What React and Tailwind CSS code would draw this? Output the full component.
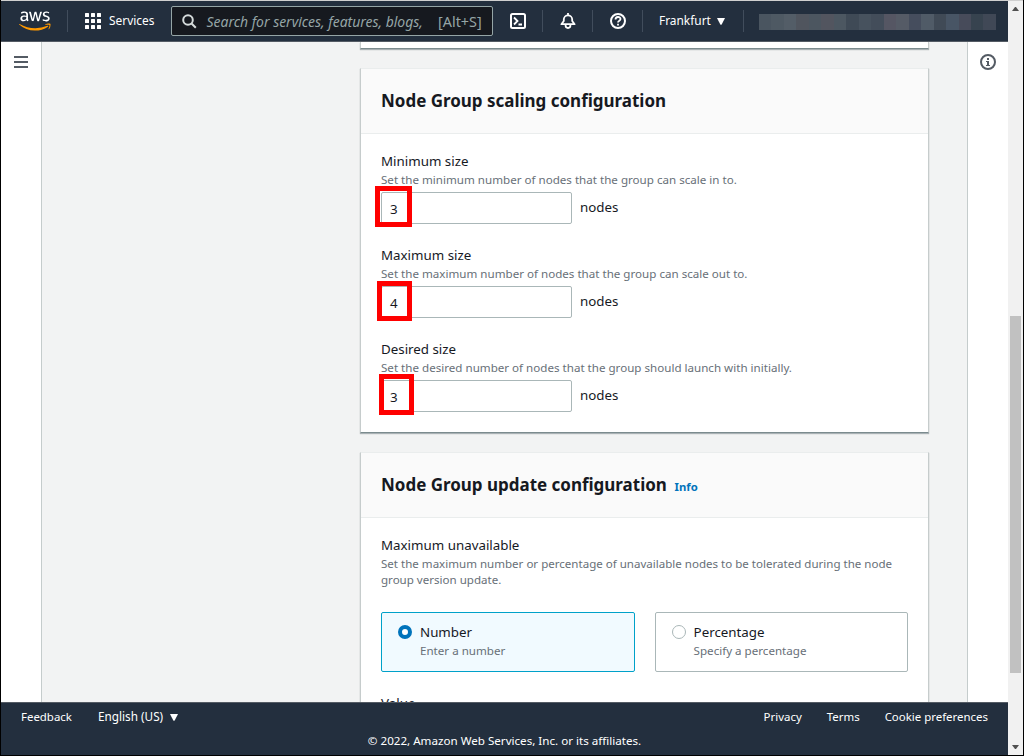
import { FaAws } from "react-icons/fa";

const blocks = ["#4a5560", "#4e5963", "#535d67", "#50555e", "#4c5660", "#52555f", "#4c5761", "#3f4a56", "#47525e", "#434d5a", "#555663", "#555b66", "#454d5d", "#505b67", "#404a56", "#485565", "#474b5a", "#37434f", "#404856"];

// Parts of the window behind that show along the left and bottom edges.
const edgeMarks = [130, 402, 674, 690, 706, 722, 738];
const bottomMarks = [[4, 3], [9, 2], [16, 4], [22, 5], [30, 3], [37, 6], [46, 3], [53, 5], [61, 5], [69, 4], [77, 3], [83, 5], [91, 6], [101, 4], [109, 5], [118, 2], [136, 4], [143, 2], [149, 6], [159, 3], [165, 5], [185, 3], [199, 5], [207, 4], [214, 6], [223, 3], [229, 5], [248, 2], [259, 3]];

const Divider = ({ className = "" }) => <span className={"h-[22px] w-px shrink-0 bg-[#414d5c] " + className} />;

const Caret = ({ className = "" }) => (
  <svg className={"shrink-0 " + className} width="8" height="7" viewBox="0 0 8 7" fill="#fff"><path d="M0 0h8L4.8 6.3q-.8 1-1.6 0z" /></svg>
);

function Header() {
  return (
    <header className="flex h-[41px] shrink-0 items-center border-b border-[#545b64] bg-[#232f3e] text-[11.9px] text-white">
      <div className="relative ml-[17.5px] mr-[0.5px] h-[26px] w-[32px] shrink-0">
        <FaAws className="h-[26px] w-[32px] [clip-path:inset(0_0_42%_0)]" />
        <FaAws className="absolute top-0 left-0 h-[26px] w-[32px] text-[#f90] [clip-path:inset(58%_0_0_0)]" />
      </div>
      <Divider className="ml-[16px]" />
      <svg className="ml-[17px] shrink-0" width="16" height="16" fill="#fff">
        {[0, 6, 12].map((y) => [0, 6, 12].map((x) => <rect key={x + "-" + y} x={x} y={y} width="4" height="4" rx=".5" />))}
      </svg>
      <span className="ml-2 w-[62px] shrink-0">Services</span>
      <div className="flex h-[30px] w-[322px] shrink-0 items-center rounded-[2px] border border-[#95a5a6] bg-[#16191f] text-[13.95px] text-[#95a5a6]">
        <svg className="ml-[10px] shrink-0" width="15" height="15" fill="none" stroke="#d5dbdb" strokeWidth="2"><circle cx="6" cy="6" r="4.8" /><path d="m9.5 9.5 4.3 4.3" /></svg>
        <span className="mt-[3px] ml-[9.5px] w-[231.5px] shrink-0 whitespace-nowrap italic">Search for services, features, blogs,</span>
        <span className="mt-px text-[14.4px] whitespace-nowrap">[Alt+S]</span>
      </div>
      <svg className="ml-[17px] shrink-0" width="16" height="16" fill="none" stroke="#fff" strokeWidth="2"><rect x="1" y="1" width="14" height="14" rx="1.5" /><path d="m4 4.5 3.5 3.5L4 11.5M8.5 11.5H12" strokeWidth="1.8" /></svg>
      <Divider className="ml-[16px]" />
      <svg className="ml-[17px] shrink-0" width="16" height="16" fill="none" stroke="#fff" strokeWidth="1.8" strokeLinejoin="round"><path d="M1.4 11.2h13.2L12.2 8V6.5a4.2 4.2 0 0 0-8.4 0V8zM5.6 12v.6a2.4 2.4 0 0 0 4.8 0V12M8 0v2.5" /></svg>
      <Divider className="ml-[16px]" />
      <svg className="ml-[17px] shrink-0" width="16" height="16" fill="none" stroke="#fff" strokeWidth="2"><circle cx="8" cy="8" r="7" /><path d="M5.5 6.5C5.5 3.2 10.5 3.3 10.5 6c0 1.8-2.5 1.5-2.5 3.5M8 10.7v1.8" strokeWidth="1.8" /></svg>
      <Divider className="ml-[16px]" />
      <span className="ml-[16px] w-[58px] shrink-0">Frankfurt</span>
      <Caret />
      <Divider className="ml-[18px]" />
      <div className="ml-[15px] flex h-4 w-[237px] shrink-0 translate-y-px">
        {blocks.map((c, i) => <span key={i} className="flex-1" style={{ backgroundColor: c }} />)}
      </div>
    </header>
  );
}

const card = "w-[569px] shrink-0 border-x border-t border-x-[#c6cccc] border-t-[#eaeded] bg-white shadow-[0_1px_1px_0_rgba(0,28,36,0.3)] border-b border-b-[#7b8b8e]";

function Title({ text, children }) {
  return (
    <div className="flex h-[65px] items-center border-b border-[#eaeded] bg-[#fafafa] px-5">
      <h2 className="-mt-px w-[285px] origin-left scale-x-[0.943] text-[18px] font-bold whitespace-nowrap">{text}</h2>
      {children}
    </div>
  );
}

function Field({ label, hint, value, mark }) {
  return (
    <div className="h-[94px]">
      <div className="h-[20px] text-[13.33px] leading-[20px]">{label}</div>
      <div className="h-[18px] whitespace-nowrap text-[11.6px] leading-[18px] text-[#687078]">{hint}</div>
      <div className="relative mt-[3px] flex">
        <div className="h-8 w-[191px] rounded-[2px] border border-[#aab7b8] pl-[8px] text-[13.33px] leading-[32px]">{value}</div>
        <span className="ml-2 text-[13.33px] leading-[30px]">nodes</span>
        <span className={"absolute border-[5px] border-[#f00] " + mark} />
      </div>
    </div>
  );
}

function Option({ on, title, sub }) {
  return (
    <div className={"flex h-[60px] rounded-[2px] border pl-[16px] " + (on ? "w-[254px] border-[#00a1c9] bg-[#f1faff]" : "w-[253px] border-[#aab7b8] bg-white")}>
      <span className={"mt-[12px] h-[14px] w-[14px] shrink-0 rounded-full bg-white " + (on ? "border-4 border-[#0073bb]" : "border border-[#aab7b8]")} />
      <div className={on ? "ml-2" : "ml-[7.6px]"}>
        <div className="mt-[9px] text-[13.33px] leading-[20px]">{title}</div>
        <div className="text-[11.6px] leading-[18px] text-[#687078]">{sub}</div>
      </div>
    </div>
  );
}

export default function App() {
  return (
    <div className="relative flex h-[756px] w-[1024px] overflow-hidden border-x border-b border-black bg-white font-['Noto_Sans',sans-serif] text-[#16191f]">
      <div className="flex w-[1007px] shrink-0 flex-col border-t border-[#d0d0d0]">
        <Header />
        <div className="flex h-[660px] shrink-0 bg-[#f2f3f3]">
          <nav className="w-[41px] shrink-0 border-r border-[#c5cccc] bg-white pt-[14px] pl-[13px]">
            <svg width="14" height="12" fill="#545b64"><path d="M0 0h14v2H0zM0 5h14v2H0zM0 10h14v2H0z" /></svg>
          </nav>
          <main className="flex w-[925px] shrink-0 flex-col gap-[19px] overflow-hidden pl-[318px]">
            <section className={card + " h-[7px] border-t-0"} />
            <section className={card + " h-[365px]"}>
              <Title text="Node Group scaling configuration" />
              <div className="px-5 pt-[17px]">
                <Field label="Minimum size" hint="Set the minimum number of nodes that the group can scale in to." value="3" mark="-left-[6px] -top-[6px] h-[41px] w-[37px]" />
                <Field label="Maximum size" hint="Set the maximum number of nodes that the group can scale out to." value="4" mark="-left-[4px] -top-[5px] h-[40px] w-[35px]" />
                <Field label="Desired size" hint="Set the desired number of nodes that the group should launch with initially." value="3" mark="-left-[2px] -top-[6px] h-[41px] w-[35px]" />
              </div>
            </section>
            <section className={card + " h-[365px]"}>
              <Title text="Node Group update configuration">
                <span className="mt-1 ml-[8.6px] text-[11.3px] font-bold text-[#0073bb]">Info</span>
              </Title>
              <div className="px-5 pt-[17px]">
                <div className="text-[13.33px] leading-[20px]">Maximum unavailable</div>
                <p className="mt-px text-[11.56px] leading-4 whitespace-nowrap text-[#687078]">Set the maximum number or percentage of unavailable nodes to be tolerated during the node<br />group version update.</p>
                <div className="mt-[24px] flex gap-5">
                  <Option on title="Number" sub="Enter a number" />
                  <Option title="Percentage" sub="Specify a percentage" />
                </div>
                <div className="mt-[21px] text-[13.33px] leading-[20px]">Value</div>
              </div>
            </section>
          </main>
          <aside className="flex-1 border-l border-[#c5cccc] bg-white pt-[12px] pl-[12px]">
            <svg width="16" height="16" fill="none" stroke="#545b64" strokeWidth="2"><circle cx="8" cy="8" r="7" /><path d="M7 4h2v2H7zM6 7h3v4h1v1H6v-1h1V8H6z" fill="#545b64" stroke="none" /></svg>
          </aside>
        </div>
        <footer className="h-[53px] shrink-0 border-t border-[#545b64] bg-[#232f3e] text-[11.62px] text-white">
          <div className="flex h-7 items-center pr-5 pl-5 text-[11.45px]">
            <span className="w-[77px]">Feedback</span>
            <span className="w-[72px] text-[11.75px] whitespace-nowrap">English (US)</span>
            <Caret />
            <span className="ml-auto">Privacy</span>
            <span className="ml-[25px]">Terms</span>
            <span className="ml-[25px]">Cookie preferences</span>
          </div>
          <div className="text-center leading-5">© 2022, Amazon Web Services, Inc. or its affiliates.</div>
        </footer>
      </div>
      <div className="flex flex-1 flex-col items-center border-t border-[#d0d0d0] bg-[#f1f1f1]">
        <svg className="mt-[6px]" width="7" height="4" fill="#505050"><path d="M3 0h1l3 4H0z" /></svg>
        <span className="mt-[305px] ml-[-1px] h-[357px] w-[11px] bg-[#c1c1c1]" />
        <svg className="mt-[72px]" width="7" height="4" fill="#505050"><path d="M0 0h7L4 4H3z" /></svg>
      </div>
      {edgeMarks.map((y) => <span key={y} className="absolute -left-px h-[6px] w-px bg-[#4272a8]" style={{ top: y }} />)}
      {bottomMarks.map(([x, w]) => <span key={x} className="absolute -bottom-px h-px bg-[#2c4a70]" style={{ left: x - 1, width: w }} />)}
    </div>
  );
}
